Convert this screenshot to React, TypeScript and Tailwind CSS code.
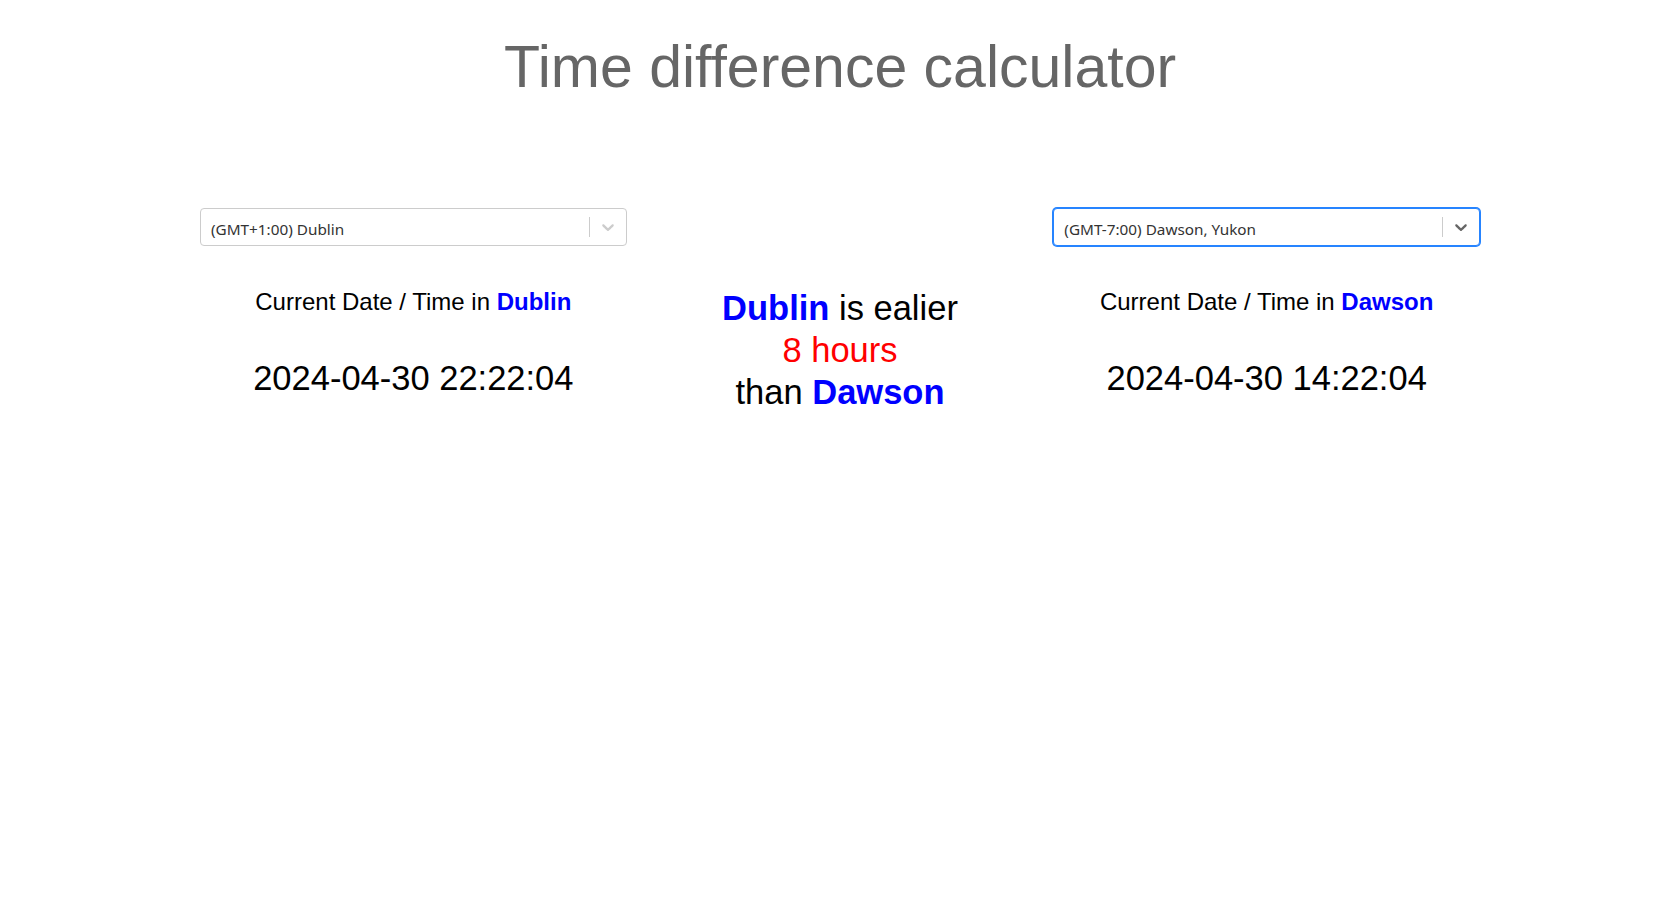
import React from "react";

const Chevron = ({ color }: { color: string }) => (
  <svg height="20" width="20" viewBox="0 0 20 20" aria-hidden="true" focusable="false" fill={color}>
    <path d="M4.516 7.548c0.436-0.446 1.043-0.481 1.576 0l3.908 3.747 3.908-3.747c0.533-0.481 1.141-0.446 1.574 0 0.436 0.445 0.408 1.197 0 1.615-0.406 0.418-4.695 4.502-4.695 4.502-0.217 0.223-0.502 0.335-0.787 0.335s-0.57-0.112-0.789-0.335c0 0-4.287-4.084-4.695-4.502s-0.436-1.17 0-1.615z" />
  </svg>
);

const Select = ({ value, focused }: { value: string; focused?: boolean }) => (
  <div
    className={
      "flex h-[38px] items-center rounded-[4px] border bg-white " +
      (focused ? "border-[#2684FF] shadow-[0_0_0_1px_#2684FF]" : "border-[#cccccc]")
    }
  >
    <div className="flex-1 px-[8px] pt-[5px] pb-[1px]">
      <div className="mx-[2px] truncate text-[15.3px] leading-[20px] text-[#333333]" style={{ fontFamily: '"Segoe UI", "Noto Sans", sans-serif' }}>
        {value}
      </div>
    </div>
    <div className="flex items-center self-stretch">
      <span className="my-[8px] w-px self-stretch bg-[#cccccc]" />
      <div className="p-[8px]">
        <Chevron color={focused ? "#666666" : "#cccccc"} />
      </div>
    </div>
  </div>
);

export default function App() {
  return (
    <div className="min-h-screen bg-white text-black" style={{ fontFamily: '"Liberation Sans", Arial, sans-serif' }}>
      <h1 className="pt-[32px] text-center text-[59px] leading-[70px] text-[#666666]">Time difference calculator</h1>
      <div className="mx-auto mt-[105.5px] grid w-[1280px] grid-cols-3">
        <div className="flex flex-col">
          <Select value="(GMT+1:00) Dublin" />
          <div className="mt-[42px] text-center text-[24px] leading-[28px]">
            Current Date / Time in <span className="font-bold text-[#0000ff]">Dublin</span>
          </div>
          <div className="mt-[42px] text-center text-[34.5px] leading-[40px]">2024-04-30 22:22:04</div>
        </div>
        <div className="flex flex-col">
          <div className="h-[38px]" />
          <div className="mt-[41.5px] text-center text-[34.5px] leading-[42px]">
            <div>
              <span className="font-bold text-[#0000ff]">Dublin</span> is ealier
            </div>
            <div className="text-[#ff0000]">8 hours</div>
            <div>
              than <span className="font-bold text-[#0000ff]">Dawson</span>
            </div>
          </div>
        </div>
        <div className="flex flex-col">
          <Select value="(GMT-7:00) Dawson, Yukon" focused />
          <div className="mt-[42px] text-center text-[24px] leading-[28px]">
            Current Date / Time in <span className="font-bold text-[#0000ff]">Dawson</span>
          </div>
          <div className="mt-[42px] text-center text-[34.5px] leading-[40px]">2024-04-30 14:22:04</div>
        </div>
      </div>
    </div>
  );
}
